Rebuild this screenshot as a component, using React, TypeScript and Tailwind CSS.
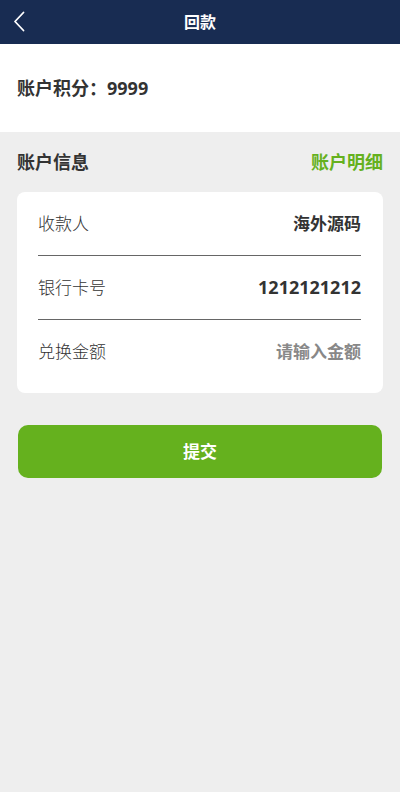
import React from "react";

const font = { fontFamily: '"Open Sans", "Noto Sans CJK SC", sans-serif' };

const App: React.FC = () => {
  return (
    <div className="min-h-[792px] bg-[#eeeeee]" style={font}>
      {/* Header */}
      <div className="relative flex h-11 items-center justify-center bg-[#182c52]">
        <button className="absolute left-[13px] top-[11px] flex">
          <svg width="12" height="21" viewBox="0 0 12 21" fill="none">
            <path d="M10.5 1.5 L2 10.5 L10.5 19.5" stroke="white" strokeWidth="1.8" strokeLinecap="round" strokeLinejoin="round" />
          </svg>
        </button>
        <h1 className="text-[16px] font-bold text-white">回款</h1>
      </div>

      {/* Points */}
      <div className="flex h-[88px] items-center bg-white px-[17px]">
        <p className="text-[18px] font-bold text-[#333]">账户积分：9999</p>
      </div>

      {/* Account info */}
      <div className="px-[17px]">
        <div className="flex h-[60px] items-center justify-between">
          <span className="text-[18px] font-bold text-[#333]">账户信息</span>
          <span className="text-[18px] font-bold text-[#65b11e]">账户明细</span>
        </div>

        <div className="rounded-[8px] bg-white pl-[21px] pr-[22px] pb-[9px]">
          <div className="flex h-16 items-center justify-between border-b border-[#666]">
            <span className="text-[17px] font-light text-[#333]">收款人</span>
            <span className="text-[17px] font-bold text-[#333]">海外源码</span>
          </div>
          <div className="flex h-16 items-center justify-between border-b border-[#666]">
            <span className="text-[17px] font-light text-[#333]">银行卡号</span>
            <span className="text-[18px] font-bold text-[#333]">1212121212</span>
          </div>
          <div className="flex h-16 items-center justify-between">
            <span className="text-[17px] font-light text-[#333]">兑换金额</span>
            <input
              type="text"
              placeholder="请输入金额"
              className="w-[160px] bg-transparent text-right text-[17px] font-bold text-[#333] outline-none placeholder:text-[#888]"
            />
          </div>
        </div>

        <div className="px-px">
          <button className="mt-8 flex h-[53px] w-full items-center justify-center rounded-[10px] bg-[#65b11e] text-[17px] font-bold text-white">
            提交
          </button>
        </div>
      </div>
    </div>
  );
};

export default App;
